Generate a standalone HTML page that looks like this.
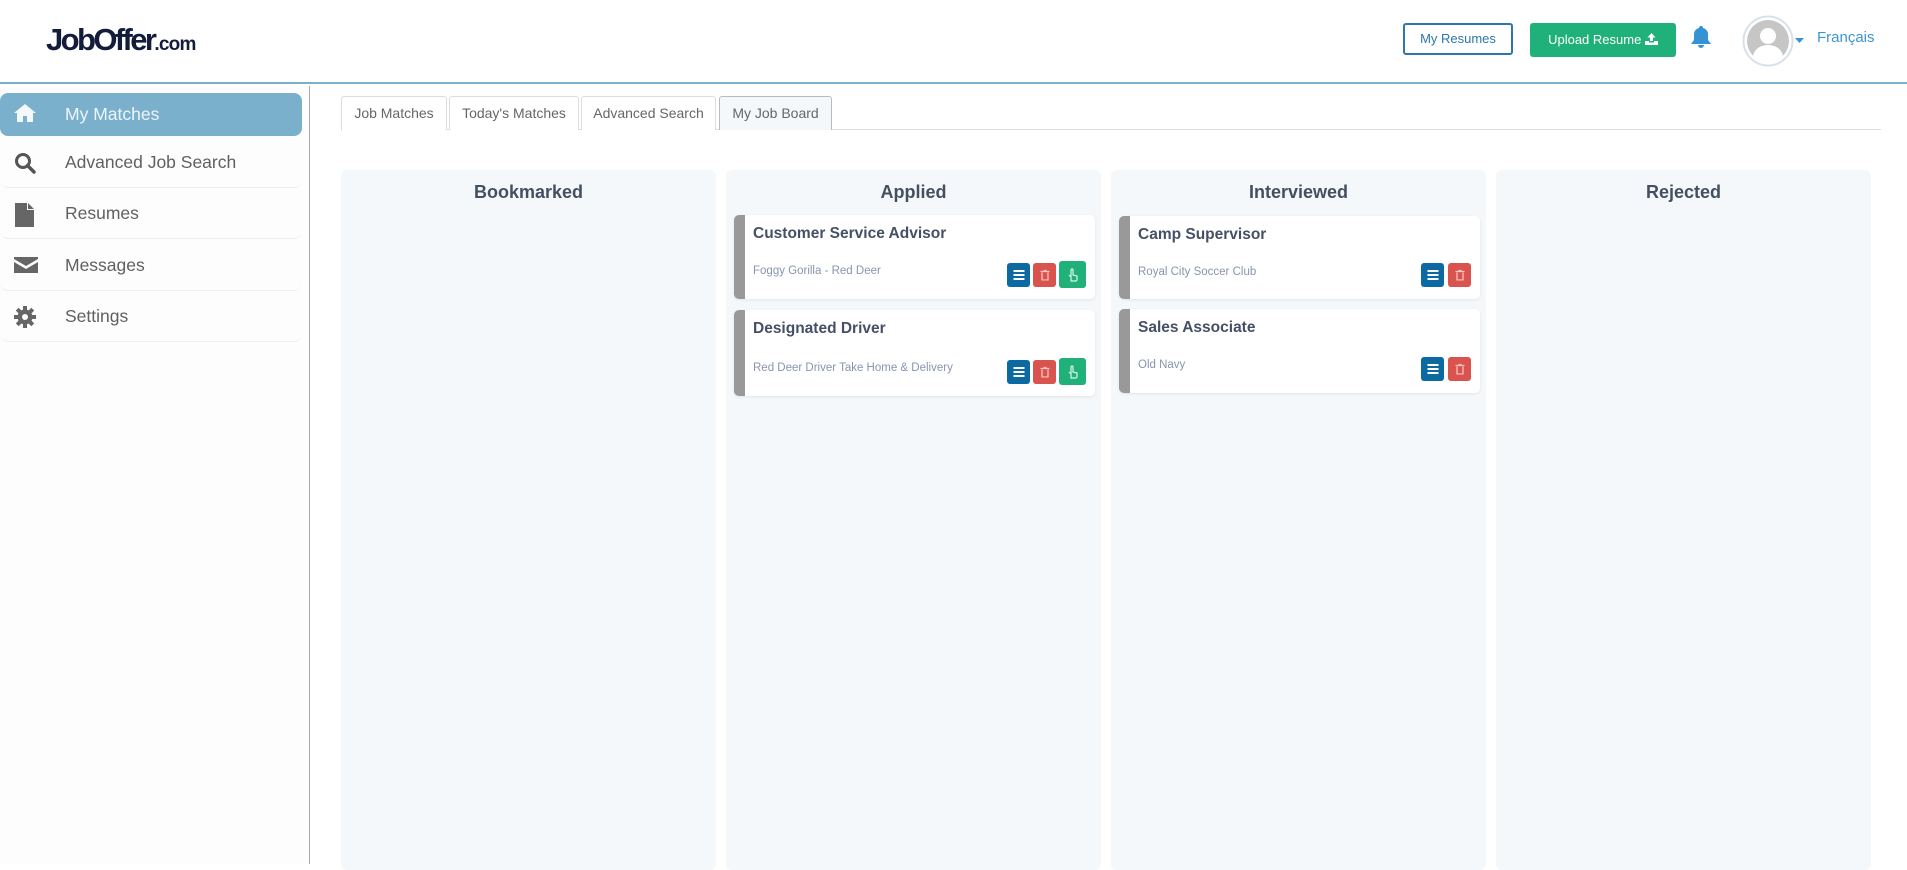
<!DOCTYPE html>
<html><head><meta charset="utf-8"><style>
*{box-sizing:border-box;margin:0;padding:0}
body{width:1907px;height:864px;overflow:hidden;background:#fff;font-family:"Liberation Sans",sans-serif;position:relative}
.abs{position:absolute}
.hdr{left:0;top:0;width:1907px;height:84px;border-bottom:2px solid #7ab0cb}
.logo{left:46px;top:22px;font-weight:bold;color:#141c3c;font-size:31px;letter-spacing:-2.6px}
.logo span{font-size:19px;letter-spacing:-0.8px}
.btn1{left:1403px;top:23px;width:110px;height:32px;border:2px solid #2d77ad;border-radius:3px;color:#2d77ad;font-size:13px;text-align:center;line-height:28px}
.btn2{left:1530px;top:23px;width:146px;height:34px;background:#20b07a;border-radius:3px;color:#fff;font-size:13px;text-align:center;line-height:34px}
.fr{left:1817px;top:29px;color:#3d96d3;font-size:15px}
.side{left:0;top:86px;width:310px;height:778px;border-right:1px solid #aaa;background:#fdfdfd}
.item{position:absolute;left:0;width:302px;height:51px;border-bottom:1px solid #eee;border-radius:0 0 8px 8px;font-size:17.5px;color:#606060;line-height:51px;padding-left:65px}
.item svg{position:absolute;left:14px;top:15px}
.active{background:#7ab0cb;color:#eef5f9;border-radius:8px;height:43px;line-height:43px;border:none}
.active svg{top:10px}
.tabs{left:341px;top:129px;width:1540px;height:1px;background:#ddd}
.tab{position:absolute;top:96px;height:34px;border:1px solid #ddd;border-bottom:none;border-radius:3px 3px 0 0;color:#666;font-size:14px;text-align:center;line-height:33px;background:#fff}
.col{position:absolute;top:170px;height:700px;width:375px;background:#f5f8fb;border-radius:6px}
.col h3{text-align:center;font-size:18px;color:#445060;font-weight:bold;margin-top:12px}
.card{position:absolute;left:8px;width:361px;background:#fff;border-left:11px solid #999;border-radius:5px;box-shadow:0 1px 3px rgba(0,0,0,.08)}
.card .t{position:absolute;left:8px;top:10px;font-size:15.5px;color:#455066;font-weight:bold}
.card .s{position:absolute;left:8px;top:50px;font-size:11.5px;color:#8795ad}
.b{position:absolute;width:23px;height:24px;border-radius:3px}
.bl{background:#0b6aa2}.rd{background:#d9534f}.gr{background:#20b07a;width:27px;height:27px}
.b svg{position:absolute;left:50%;top:50%;transform:translate(-50%,-50%)}
</style></head><body>
<div class="abs hdr"></div>
<div class="abs logo">JobOffer<span>.com</span></div>
<div class="abs btn1">My Resumes</div>
<div class="abs btn2">Upload Resume <svg width="13" height="12" viewBox="0 0 13 12" style="vertical-align:-1px"><path d="M6.5 0L2.5 4.5H5V8H8V4.5H10.5Z M0 8h4v1.5h5V8h4v4H0z" fill="#fff"/></svg></div>
<svg class="abs" style="left:1691px;top:25px" width="20" height="24" viewBox="0 0 20 24"><path d="M10 1a2 2 0 0 1 2 2 6 6 0 0 1 5 6v6l3 4H0l3-4V9a6 6 0 0 1 5-6 2 2 0 0 1 2-2z M7 20h6a3 3 0 0 1-6 0z" fill="#3593d3"/></svg>
<svg class="abs" style="left:1742px;top:15px" width="52" height="52" viewBox="0 0 52 52"><circle cx="26" cy="26" r="24.5" fill="#fff" stroke="#d7e1ea" stroke-width="2"/><circle cx="26" cy="26" r="21" fill="#c6c6c6"/><circle cx="26" cy="21" r="8" fill="#fff"/><path d="M11 42a15 12 0 0 1 30 0a21 21 0 0 1-30 0z" fill="#fff"/></svg>
<svg class="abs" style="left:1795px;top:38px" width="10" height="6"><path d="M0 0h9L4.5 5z" fill="#3593d3"/></svg>
<div class="abs fr">Français</div>

<div class="abs side">
<div class="item active" style="top:7px"><svg width="22" height="20" viewBox="0 0 22 20"><path d="M11 1L0 10h3v9h6v-6h4v6h6v-9h3z" fill="#f4f8fb"/></svg>My Matches</div>
<div class="item" style="top:51px"><svg width="22" height="22" viewBox="0 0 22 22"><circle cx="9" cy="9" r="6.5" fill="none" stroke="#555" stroke-width="3"/><path d="M13.5 13.5L20 20" stroke="#555" stroke-width="3.5" stroke-linecap="round"/></svg>Advanced Job Search</div>
<div class="item" style="top:102px"><svg width="22" height="24" viewBox="0 0 22 24"><path d="M1 0h12v7h7v17H1z M14 0l6 6h-6z" fill="#666"/></svg>Resumes</div>
<div class="item" style="top:154px"><svg width="24" height="20" viewBox="0 0 24 20"><path d="M0 2h24v2L12 11 0 4z M0 7l12 7 12-7v11H0z" fill="#666"/></svg>Messages</div>
<div class="item" style="top:205px"><svg width="22" height="22" viewBox="0 0 22 22"><g fill="#666"><circle cx="11" cy="11" r="7.5"/><rect x="9" y="0" width="4" height="22"/><rect x="0" y="9" width="22" height="4"/><rect x="9" y="0" width="4" height="22" transform="rotate(45 11 11)"/><rect x="9" y="0" width="4" height="22" transform="rotate(-45 11 11)"/></g><circle cx="11" cy="11" r="3" fill="#fff"/></svg>Settings</div>
</div>

<div class="abs tabs"></div>
<div class="tab" style="left:341px;width:106px">Job Matches</div>
<div class="tab" style="left:449px;width:130px">Today's Matches</div>
<div class="tab" style="left:581px;width:135px">Advanced Search</div>
<div class="tab" style="left:719px;width:113px;background:#f5f8fb;border-color:#bbb;height:34px">My Job Board</div>

<div class="col" style="left:341px"><h3>Bookmarked</h3></div>
<div class="col" style="left:726px"><h3>Applied</h3>
 <div class="card" style="top:45px;height:84px"><div class="t">Customer Service Advisor</div><div class="s">Foggy Gorilla - Red Deer</div>
  <div class="b bl" style="left:262px;top:48px"><svg width="11" height="10"><path d="M0 1h11M0 5h11M0 9h11" stroke="#fff" stroke-width="2"/></svg></div>
  <div class="b rd" style="left:288px;top:48px"><svg width="9" height="11"><path d="M0 2h9M3 1h3M1.5 3v7.5h6V3" stroke="#f7c3c0" fill="none" stroke-width="1.3"/></svg></div>
  <div class="b gr" style="left:314px;top:46px"><svg width="12" height="14"><path d="M4 13V2a1 1 0 0 1 2 0v5l4 1v4l-1 1z M4 9L2 7" stroke="#d9f5e8" fill="none" stroke-width="1.2"/></svg></div>
 </div>
 <div class="card" style="top:140px;height:86px"><div class="t">Designated Driver</div><div class="s" style="top:52px">Red Deer Driver Take Home &amp; Delivery</div>
  <div class="b bl" style="left:262px;top:50px"><svg width="11" height="10"><path d="M0 1h11M0 5h11M0 9h11" stroke="#fff" stroke-width="2"/></svg></div>
  <div class="b rd" style="left:288px;top:50px"><svg width="9" height="11"><path d="M0 2h9M3 1h3M1.5 3v7.5h6V3" stroke="#f7c3c0" fill="none" stroke-width="1.3"/></svg></div>
  <div class="b gr" style="left:314px;top:48px"><svg width="12" height="14"><path d="M4 13V2a1 1 0 0 1 2 0v5l4 1v4l-1 1z M4 9L2 7" stroke="#d9f5e8" fill="none" stroke-width="1.2"/></svg></div>
 </div>
</div>
<div class="col" style="left:1111px"><h3>Interviewed</h3>
 <div class="card" style="top:46px;height:83px"><div class="t">Camp Supervisor</div><div class="s">Royal City Soccer Club</div>
  <div class="b bl" style="left:291px;top:47px"><svg width="11" height="10"><path d="M0 1h11M0 5h11M0 9h11" stroke="#fff" stroke-width="2"/></svg></div>
  <div class="b rd" style="left:318px;top:47px"><svg width="9" height="11"><path d="M0 2h9M3 1h3M1.5 3v7.5h6V3" stroke="#f7c3c0" fill="none" stroke-width="1.3"/></svg></div>
 </div>
 <div class="card" style="top:139px;height:84px"><div class="t">Sales Associate</div><div class="s">Old Navy</div>
  <div class="b bl" style="left:291px;top:48px"><svg width="11" height="10"><path d="M0 1h11M0 5h11M0 9h11" stroke="#fff" stroke-width="2"/></svg></div>
  <div class="b rd" style="left:318px;top:48px"><svg width="9" height="11"><path d="M0 2h9M3 1h3M1.5 3v7.5h6V3" stroke="#f7c3c0" fill="none" stroke-width="1.3"/></svg></div>
 </div>
</div>
<div class="col" style="left:1496px"><h3>Rejected</h3></div>
</body></html>
